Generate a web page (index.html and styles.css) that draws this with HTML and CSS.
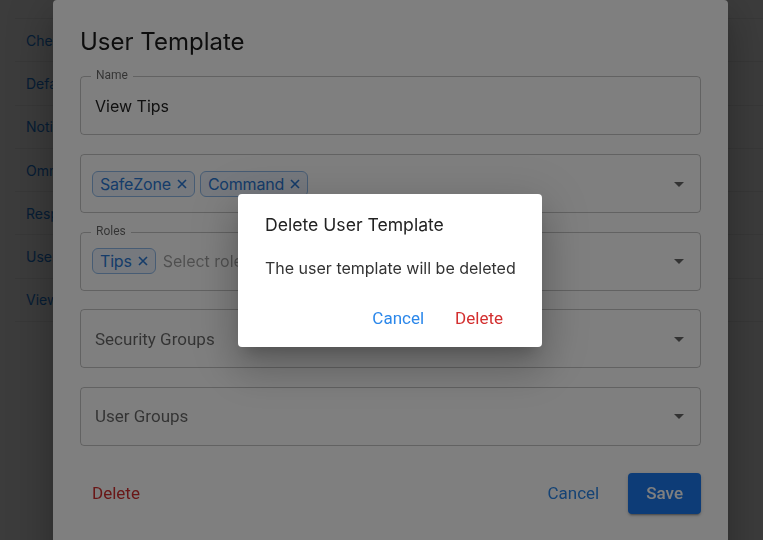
FILE: index.html
```html
<!DOCTYPE html>
<html lang="en">
<head>
<meta charset="utf-8">
<title>User Template</title>
<link rel="stylesheet" href="styles.css">
</head>
<body>
<div class="page">
  <ul class="list">
    <li class="list-item">Checklists</li>
    <li class="list-item">Default Settings</li>
    <li class="list-item">Notifications</li>
    <li class="list-item">Omnichannel</li>
    <li class="list-item">Responses</li>
    <li class="list-item">User Templates</li>
    <li class="list-item">View Tips</li>
  </ul>
</div>

<div class="backdrop"></div>

<section class="dialog-outer">
  <h1 class="outer-title">User Template</h1>
  <div class="fields">
    <div class="field">
      <span class="field-label">Name</span>
      <span class="field-value">View Tips</span>
    </div>
    <div class="field field-chips">
      <div class="chips">
        <span class="chip">SafeZone<svg class="chip-x" viewBox="0 0 10 10"><path d="M1 1L9 9M9 1L1 9"/></svg></span>
        <span class="chip">Command<svg class="chip-x" viewBox="0 0 10 10"><path d="M1 1L9 9M9 1L1 9"/></svg></span>
      </div>
      <svg class="arrow" viewBox="0 0 24 24"><path d="M7 10l5 5 5-5z"/></svg>
    </div>
    <div class="field field-chips">
      <span class="field-label">Roles</span>
      <div class="chips">
        <span class="chip">Tips<svg class="chip-x" viewBox="0 0 10 10"><path d="M1 1L9 9M9 1L1 9"/></svg></span>
        <span class="placeholder">Select roles</span>
      </div>
      <svg class="arrow" viewBox="0 0 24 24"><path d="M7 10l5 5 5-5z"/></svg>
    </div>
    <div class="field">
      <span class="field-hint">Security Groups</span>
      <svg class="arrow" viewBox="0 0 24 24"><path d="M7 10l5 5 5-5z"/></svg>
    </div>
    <div class="field">
      <span class="field-hint">User Groups</span>
      <svg class="arrow" viewBox="0 0 24 24"><path d="M7 10l5 5 5-5z"/></svg>
    </div>
  </div>
  <div class="outer-actions">
    <button class="btn btn-danger">Delete</button>
    <div class="spacer"></div>
    <button class="btn btn-text">Cancel</button>
    <button class="btn btn-primary">Save</button>
  </div>
</section>

<div class="backdrop"></div>

<section class="dialog-inner">
  <h2 class="inner-title">Delete User Template</h2>
  <p class="inner-body">The user template will be deleted</p>
  <div class="inner-actions">
    <button class="btn btn-text">Cancel</button>
    <button class="btn btn-danger">Delete</button>
  </div>
</section>
</body>
</html>
```

FILE: styles.css
```css
* { box-sizing: border-box; }

html, body {
  margin: 0;
  height: 540px;
  overflow: hidden;
}

body {
  background: #f0f0f0;
  font-family: "Inter", "Roboto", sans-serif;
  color: #212121;
}

.page {
  padding: 18px 0 0 15px;
}

.list {
  list-style: none;
  margin: 0;
  padding: 0;
  border-top: 1px solid #e0e0e0;
}

.list-item {
  height: 43.3px;
  display: flex;
  align-items: center;
  padding-left: 11px;
  border-bottom: 1px solid #e0e0e0;
  font-family: "Inter", sans-serif;
  font-size: 14px;
  color: #1976d2;
}

.backdrop {
  position: fixed;
  inset: 0;
  background: rgba(0, 0, 0, 0.5);
}

.dialog-outer {
  position: absolute;
  left: 53px;
  top: 0;
  width: 675px;
  height: 600px;
  background: #fff;
  border-radius: 4px;
  padding: 26px 27px 0 27px;
  box-shadow: 0 11px 15px -7px rgba(0,0,0,.2), 0 24px 38px 3px rgba(0,0,0,.14), 0 9px 46px 8px rgba(0,0,0,.12);
}

.outer-title {
  margin: 0;
  font-size: 24px;
  line-height: 32px;
  font-weight: 400;
  color: #1a1a1a;
}

.fields {
  margin-top: 18px;
  display: flex;
  flex-direction: column;
  gap: 19px;
}

.field {
  position: relative;
  height: 59px;
  border: 1px solid rgba(0, 0, 0, 0.23);
  border-radius: 4px;
  display: flex;
  align-items: center;
  padding: 0 9px 0 14px;
}

.field + .field + .field { margin-top: -0.5px; }
.field + .field + .field + .field { margin-top: -0.5px; }

.field-chips {
  padding-left: 11px;
}

.field-label {
  position: absolute;
  left: 10px;
  top: -8px;
  padding: 0 5px;
  background: #fff;
  font-family: "Roboto", sans-serif;
  font-size: 12px;
  line-height: 12px;
  color: rgba(0, 0, 0, 0.6);
}

.field-value {
  font-size: 16px;
  color: #222;
}

.field-hint {
  flex: 1;
  font-family: "Roboto", sans-serif;
  font-size: 17px;
  color: rgba(0, 0, 0, 0.6);
}

.chips {
  flex: 1;
  display: flex;
  align-items: center;
  gap: 5px;
}

.chip {
  height: 26px;
  display: inline-flex;
  align-items: center;
  gap: 6px;
  padding: 0 7px 0 7px;
  border: 1px solid #8fb9e8;
  border-radius: 6px;
  background: #ecf3fc;
  color: #2a78d4;
  font-size: 16px;
  letter-spacing: -0.2px;
}

.chip-x {
  width: 10px;
  height: 10px;
  stroke: #2a78d4;
  stroke-width: 1.6;
  fill: none;
}

.placeholder {
  margin-left: 2px;
  font-size: 16px;
  color: rgba(0, 0, 0, 0.38);
}

.arrow {
  width: 24px;
  height: 24px;
  fill: rgba(0, 0, 0, 0.6);
  margin-left: auto;
}

.outer-actions {
  margin-top: 27px;
  display: flex;
  align-items: center;
}

.spacer { flex: 1; }

.btn {
  border: 0;
  background: transparent;
  font-family: "Roboto", sans-serif;
  font-size: 17px;
  line-height: 24px;
  padding: 6px 12px;
  border-radius: 4px;
  cursor: pointer;
  white-space: nowrap;
}

.btn-danger { color: #d32f2f; }
.btn-text { color: #2b87ea; }

.outer-actions .btn-text { margin-right: 17px; }

.btn-primary {
  background: #1a79ee;
  color: #fff;
  font-size: 17px;
  font-weight: 500;
  padding: 8px 18px 9px;
  box-shadow: 0 3px 1px -2px rgba(0,0,0,.2), 0 2px 2px 0 rgba(0,0,0,.14), 0 1px 5px 0 rgba(0,0,0,.12);
}

.dialog-inner {
  position: absolute;
  left: 238px;
  top: 194px;
  width: 304px;
  height: 153px;
  background: #fff;
  border-radius: 4px;
  padding: 19px 27px 11px 27px;
  box-shadow: 0 11px 15px -7px rgba(0,0,0,.2), 0 24px 38px 3px rgba(0,0,0,.14), 0 9px 46px 8px rgba(0,0,0,.12);
}

.inner-title {
  margin: 0;
  font-size: 17.6px;
  line-height: 24px;
  font-weight: 400;
  color: #222;
}

.inner-body {
  margin: 20px -10px 0 0;
  font-size: 16px;
  line-height: 22px;
  color: #333;
  white-space: nowrap;
}

.inner-actions {
  margin-top: 21px;
  display: flex;
  justify-content: flex-end;
  gap: 7px;
}
```
